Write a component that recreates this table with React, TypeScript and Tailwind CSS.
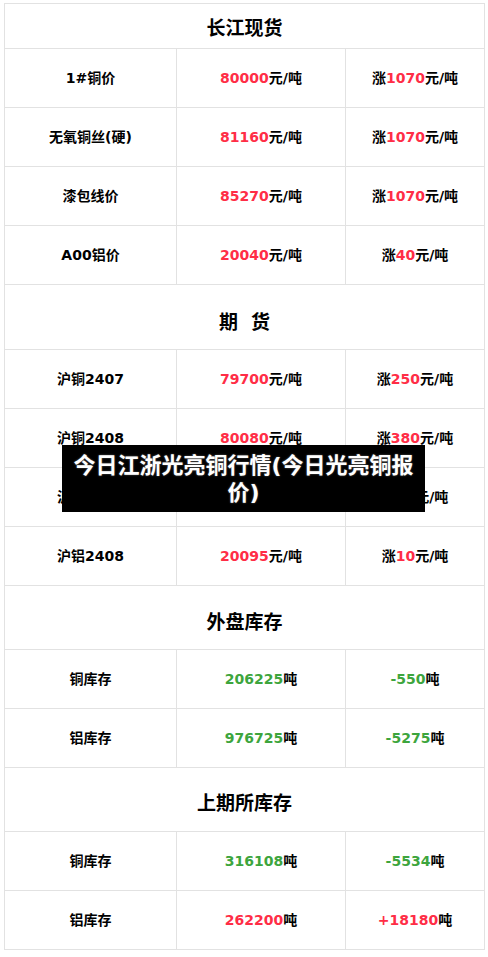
import React from 'react';

interface Row {
  name: string;
  price: string;
  priceUnit: string;
  priceColor: string;
  prefix?: string;
  change: string;
  changeUnit: string;
  changeColor: string;
}

interface Section {
  title: string;
  headClass: string;
  rows: Row[];
}

const RED = 'text-[#ff2d46]';
const GREEN = 'text-[#3da53d]';

const sections: Section[] = [
  {
    title: '长江现货',
    headClass: 'h-[45px] pt-[4px]',
    rows: [
      { name: '1#铜价', price: '80000', priceUnit: '元/吨', priceColor: RED, prefix: '涨', change: '1070', changeUnit: '元/吨', changeColor: RED },
      { name: '无氧铜丝(硬)', price: '81160', priceUnit: '元/吨', priceColor: RED, prefix: '涨', change: '1070', changeUnit: '元/吨', changeColor: RED },
      { name: '漆包线价', price: '85270', priceUnit: '元/吨', priceColor: RED, prefix: '涨', change: '1070', changeUnit: '元/吨', changeColor: RED },
      { name: 'A00铝价', price: '20040', priceUnit: '元/吨', priceColor: RED, prefix: '涨', change: '40', changeUnit: '元/吨', changeColor: RED },
    ],
  },
  {
    title: '期\u00a0\u00a0货',
    headClass: 'h-[65px] pt-[10px]',
    rows: [
      { name: '沪铜2407', price: '79700', priceUnit: '元/吨', priceColor: RED, prefix: '涨', change: '250', changeUnit: '元/吨', changeColor: RED },
      { name: '沪铜2408', price: '80080', priceUnit: '元/吨', priceColor: RED, prefix: '涨', change: '380', changeUnit: '元/吨', changeColor: RED },
      { name: '沪铝2407', price: '20085', priceUnit: '元/吨', priceColor: RED, prefix: '涨', change: '15', changeUnit: '元/吨', changeColor: RED },
      { name: '沪铝2408', price: '20095', priceUnit: '元/吨', priceColor: RED, prefix: '涨', change: '10', changeUnit: '元/吨', changeColor: RED },
    ],
  },
  {
    title: '外盘库存',
    headClass: 'h-[64px] pt-[10px]',
    rows: [
      { name: '铜库存', price: '206225', priceUnit: '吨', priceColor: GREEN, change: '-550', changeUnit: '吨', changeColor: GREEN },
      { name: '铝库存', price: '976725', priceUnit: '吨', priceColor: GREEN, change: '-5275', changeUnit: '吨', changeColor: GREEN },
    ],
  },
  {
    title: '上期所库存',
    headClass: 'h-[64px] pt-[8px]',
    rows: [
      { name: '铜库存', price: '316108', priceUnit: '吨', priceColor: GREEN, change: '-5534', changeUnit: '吨', changeColor: GREEN },
      { name: '铝库存', price: '262200', priceUnit: '吨', priceColor: RED, change: '+18180', changeUnit: '吨', changeColor: RED },
    ],
  },
];

const App = () => {
  return (
    <div className="relative bg-white w-[488px] h-[957px] pt-[3px] pl-[4px] font-['DejaVu_Sans','Noto_Sans_CJK_SC',sans-serif] text-black">
      <table className="w-[480px] border-collapse table-fixed">
        <colgroup>
          <col className="w-[172px]" />
          <col className="w-[169px]" />
          <col className="w-[139px]" />
        </colgroup>
        <tbody>
          {sections.map((section) => (
            <React.Fragment key={section.title}>
              <tr>
                <td colSpan={3} className={`border border-[#e2e2e2] text-center text-[19px] font-bold px-0 pb-0 ${section.headClass}`}>
                  {section.title}
                </td>
              </tr>
              {section.rows.map((row, idx) => (
                <tr key={idx} className="h-[59px] text-[14px] font-bold">
                  <td className="border border-[#e2e2e2] text-center p-0">{row.name}</td>
                  <td className="border border-[#e2e2e2] text-center p-0">
                    <span className={row.priceColor}>{row.price}</span>
                    {row.priceUnit}
                  </td>
                  <td className="border border-[#e2e2e2] text-center p-0">
                    {row.prefix}
                    <span className={row.changeColor}>{row.change}</span>
                    {row.changeUnit}
                  </td>
                </tr>
              ))}
            </React.Fragment>
          ))}
        </tbody>
      </table>

      {/* title overlay */}
      <div className="absolute left-[62px] top-[445px] w-[363px] h-[67px] bg-black flex items-center justify-center px-[10px]">
        <p className="text-white text-[22px] font-bold leading-[27px] text-center [text-shadow:0_0_2px_rgba(255,255,255,0.4)]">
          今日江浙光亮铜行情(今日光亮铜报价)
        </p>
      </div>
    </div>
  );
};

export default App;
